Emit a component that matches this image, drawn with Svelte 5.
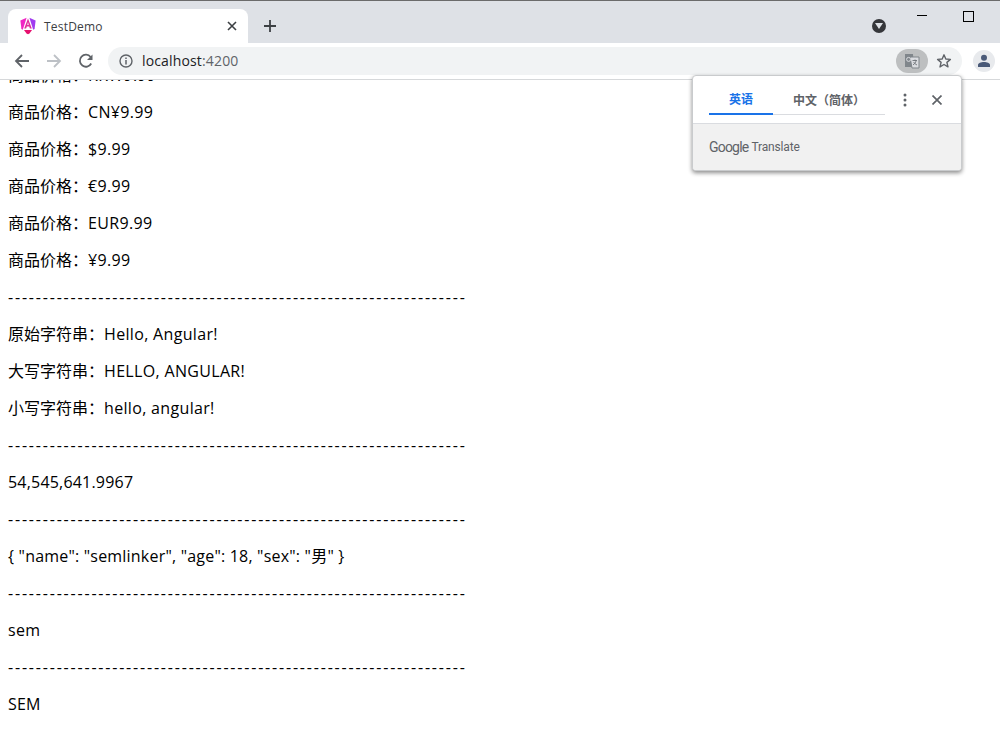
<script lang="ts">
	const rule = '-'.repeat(66);
	const lines = [
		{ label: '商品价格：', value: 'KRW9.99' },
		{ label: '商品价格：', value: 'CN¥9.99' },
		{ label: '商品价格：', value: '$9.99' },
		{ label: '商品价格：', value: '€9.99' },
		{ label: '商品价格：', value: 'EUR9.99' },
		{ label: '商品价格：', value: '¥9.99' },
		{ rule },
		{ label: '原始字符串：', value: 'Hello, Angular!' },
		{ label: '大写字符串：', value: 'HELLO, ANGULAR!' },
		{ label: '小写字符串：', value: 'hello, angular!' },
		{ rule },
		{ label: '', value: '54,545,641.9967', tight: true },
		{ rule },
		{ label: '', value: '{ "name": "semlinker", "age": 18, "sex": "男" }', tight: true },
		{ rule },
		{ label: '', value: 'sem' },
		{ rule },
		{ label: '', value: 'SEM', tight: true }
	];
</script>

<div class="browser">
	<header class="tabstrip">
		<div class="tab">
			<svg class="favicon" width="16" height="18" viewBox="0 0 16 18">
				<path d="M0.4 3.4 L6.6 0.8 L2.8 12.8 L1.4 12 Z" fill="#f026c4" />
				<path d="M15.6 3.4 L9.4 0.8 L13.2 12.8 L14.6 12 Z" fill="#a03cf0" />
				<path d="M8 1.6 L11.8 11.6 L9.9 11.6 L9.2 9.6 L6.8 9.6 L6.1 11.6 L4.2 11.6 Z M8 5 L7.3 8 L8.7 8 Z" fill="#e0309c" fill-rule="evenodd" />
				<path d="M4 13 L12 13 L9.5 16.4 L8 17.2 L6.5 16.4 Z" fill="#e6106e" />
			</svg>
			<span class="tab-title">TestDemo</span>
			<svg class="tab-close" width="10" height="10" viewBox="0 0 10 10">
				<path d="M1 1 L9 9 M9 1 L1 9" stroke="#3c4043" stroke-width="1.6" />
			</svg>
		</div>
		<svg class="new-tab" width="12" height="12" viewBox="0 0 12 12">
			<path d="M6 0 V12 M0 6 H12" stroke="#3c4043" stroke-width="1.8" />
		</svg>
		<div class="spacer"></div>
		<span class="media-btn">
			<svg width="8" height="6" viewBox="0 0 8 6"><path d="M0 0 H8 L4 6 Z" fill="#dee1e6" /></svg>
		</span>
		<div class="window-btns">
			<span class="minimize"></span>
			<span class="maximize"></span>
		</div>
	</header>

	<nav class="toolbar">
		<svg class="nav-icon" width="16" height="16" viewBox="0 0 16 16">
			<path d="M15 8 H2 M8 2 L2 8 L8 14" fill="none" stroke="#5f6368" stroke-width="1.8" />
		</svg>
		<svg class="nav-icon" width="16" height="16" viewBox="0 0 16 16">
			<path d="M1 8 H14 M8 2 L14 8 L8 14" fill="none" stroke="#bdc1c6" stroke-width="1.8" />
		</svg>
		<svg class="nav-icon" width="16" height="16" viewBox="0 0 16 16">
			<path d="M13.2 10.5 A6 6 0 1 1 12.6 4" fill="none" stroke="#5f6368" stroke-width="1.8" />
			<path d="M14.5 1.5 V7 H9 Z" fill="#5f6368" />
		</svg>
		<div class="omnibox">
			<svg width="14" height="14" viewBox="0 0 14 14">
				<circle cx="7" cy="7" r="6" fill="none" stroke="#5f6368" stroke-width="1.4" />
				<path d="M7 6 V10.5 M7 3.4 V5" stroke="#5f6368" stroke-width="1.5" />
			</svg>
			<span class="url">localhost<span class="port">:4200</span></span>
			<div class="spacer"></div>
			<span class="translate-chip">
				<svg width="16" height="16" viewBox="0 0 16 16">
					<path d="M1 1 H9 L10 14 H1 Z" fill="#80868b" />
					<path d="M6 4 H15 V15 H8 Z" fill="#dadce0" stroke="#80868b" />
					<circle cx="4.6" cy="6.4" r="2" fill="none" stroke="#dadce0" stroke-width="1" />
					<path d="M8.5 7.5 H13 M11 6.5 V8 M12.2 7.5 C11.6 10 10.4 11 9 11.8 M9.6 9 C10.4 10.4 11.6 11.4 13 12" fill="none" stroke="#70757a" stroke-width="0.9" />
				</svg>
			</span>
			<svg class="star" width="16" height="16" viewBox="0 0 16 16">
				<path d="M8 1.8 L9.8 6 L14.4 6.4 L10.9 9.4 L12 13.9 L8 11.5 L4 13.9 L5.1 9.4 L1.6 6.4 L6.2 6 Z" fill="none" stroke="#5f6368" stroke-width="1.4" stroke-linejoin="round" />
			</svg>
		</div>
		<span class="avatar">
			<svg width="14" height="14" viewBox="0 0 14 14">
				<circle cx="7" cy="3.8" r="3" fill="#4a5a78" />
				<path d="M1 13 V11 C1 9 4 8 7 8 C10 8 13 9 13 11 V13 Z" fill="#4a5a78" />
			</svg>
		</span>
	</nav>

	<main class="page">
		{#each lines as line}
			{#if line.rule}
				<p class="rule">{line.rule}</p>
			{:else}
				<p>{line.label}<span class="value" class:tight={line.tight}>{line.value}</span></p>
			{/if}
		{/each}
	</main>

	<aside class="translate-popup">
		<div class="popup-top">
			<div class="tabs">
				<span class="lang active">英语</span>
				<span class="lang">中文（简体）</span>
			</div>
			<svg class="more" width="4" height="14" viewBox="0 0 4 14">
				<circle cx="2" cy="2" r="1.5" fill="#5f6368" />
				<circle cx="2" cy="7" r="1.5" fill="#5f6368" />
				<circle cx="2" cy="12" r="1.5" fill="#5f6368" />
			</svg>
			<svg class="close" width="10" height="10" viewBox="0 0 10 10">
				<path d="M0.5 0.5 L9.5 9.5 M9.5 0.5 L0.5 9.5" stroke="#5f6368" stroke-width="1.7" />
			</svg>
		</div>
		<div class="popup-footer">
			<span class="google">Google</span>
			<span class="gt">Translate</span>
		</div>
	</aside>
</div>

<style>
	:global(body) {
		margin: 0;
		background: #fff;
	}

	.browser {
		position: relative;
		height: 730px;
		overflow: hidden;
		font-family: 'Open Sans', 'Noto Sans CJK SC', sans-serif;
	}

	.spacer {
		flex: 1;
	}

	.tabstrip {
		display: flex;
		align-items: flex-end;
		height: 43px;
		padding-left: 8px;
		background: #dee1e6;
		border-top: 1px solid #6b6b6b;
		box-sizing: border-box;
	}

	.tab {
		display: flex;
		align-items: center;
		width: 240px;
		height: 34px;
		padding: 0 11px 0 12px;
		box-sizing: border-box;
		background: #fff;
		border-radius: 8px 8px 0 0;
	}

	.tab-title {
		flex: 1;
		margin-left: 8px;
		font-size: 12px;
		letter-spacing: 0.2px;
		color: #3c4043;
	}

	.new-tab {
		margin: 0 0 11px 16px;
	}

	.media-btn {
		display: flex;
		align-items: center;
		justify-content: center;
		width: 14px;
		height: 14px;
		margin-bottom: 10px;
		border-radius: 50%;
		background: #35363a;
	}

	.window-btns {
		display: flex;
		align-self: flex-start;
		gap: 36px;
		margin: 10px 26px 0 31px;
	}

	.minimize {
		width: 10px;
		height: 1px;
		margin-top: 4px;
		background: #000;
	}

	.maximize {
		width: 9px;
		height: 9px;
		border: 1px solid #000;
	}

	.toolbar {
		display: flex;
		align-items: center;
		height: 36px;
		padding: 0 5px 0 14px;
		gap: 16px;
		background: #fff;
		border-bottom: 1px solid #d6d8da;
	}

	.omnibox {
		display: flex;
		align-items: center;
		flex: 1;
		height: 28px;
		margin-left: -2px;
		padding: 0 10px 0 11px;
		background: #f1f3f4;
		border-radius: 14px;
	}

	.url {
		margin: 0 0 2px 9px;
		font-size: 14px;
		letter-spacing: 0.15px;
		color: #202124;
	}

	.port {
		color: #5f6368;
	}

	.translate-chip {
		display: flex;
		align-items: center;
		justify-content: center;
		width: 32px;
		height: 24px;
		border-radius: 12px;
		background: #bdbfc0;
	}

	.star {
		margin-left: 8px;
	}

	.avatar {
		display: flex;
		align-items: center;
		justify-content: center;
		width: 22px;
		height: 22px;
		margin-left: -5px;
		border-radius: 50%;
		background: #e8eaed;
	}

	.page {
		height: 650px;
		overflow: hidden;
		padding-left: 8px;
		font-size: 16px;
		color: #000;
	}

	/* page is scrolled: the first line sits mostly under the toolbar */
	.page p {
		position: relative;
		top: -15px;
		height: 21px;
		margin: 0 0 16px;
		line-height: 21px;
		white-space: nowrap;
	}

	.page p.rule {
		letter-spacing: 1.8px;
	}

	.value {
		letter-spacing: 0.33px;
	}

	.value.tight {
		letter-spacing: 0.2px;
	}

	.translate-popup {
		position: absolute;
		left: 692px;
		top: 75px;
		width: 268px;
		height: 94px;
		border: 1px solid #c9cbcd;
		border-radius: 4px;
		background: #fff;
		box-shadow: 0 2px 4px rgba(0, 0, 0, 0.45);
		overflow: hidden;
	}

	.popup-top {
		display: flex;
		align-items: center;
		height: 47px;
		padding-left: 16px;
		border-bottom: 1px solid #dadce0;
	}

	.tabs {
		display: flex;
		align-self: flex-start;
		box-sizing: border-box;
		width: 176px;
		height: 39px;
		border-bottom: 1px solid #dadce0;
	}

	.lang {
		display: flex;
		align-items: center;
		justify-content: center;
		flex: 1;
		box-sizing: border-box;
		height: 39px;
		padding-top: 9px;
		font-size: 12px;
		font-weight: 700;
		color: #5f6368;
		white-space: nowrap;
	}

	.lang.active {
		flex: none;
		width: 64px;
		color: #1a73e8;
		border-bottom: 2px solid #1a73e8;
	}

	.more {
		margin-left: 18px;
	}

	.close {
		margin-left: 25px;
	}

	.popup-footer {
		display: flex;
		align-items: center;
		gap: 3px;
		height: 46px;
		padding-left: 16px;
		background: #f1f1f1;
		color: #5f6368;
		font-family: Roboto, sans-serif;
	}

	.google {
		font-size: 14px;
		letter-spacing: -0.8px;
	}

	.gt {
		font-size: 12px;
		letter-spacing: -0.15px;
	}
</style>
